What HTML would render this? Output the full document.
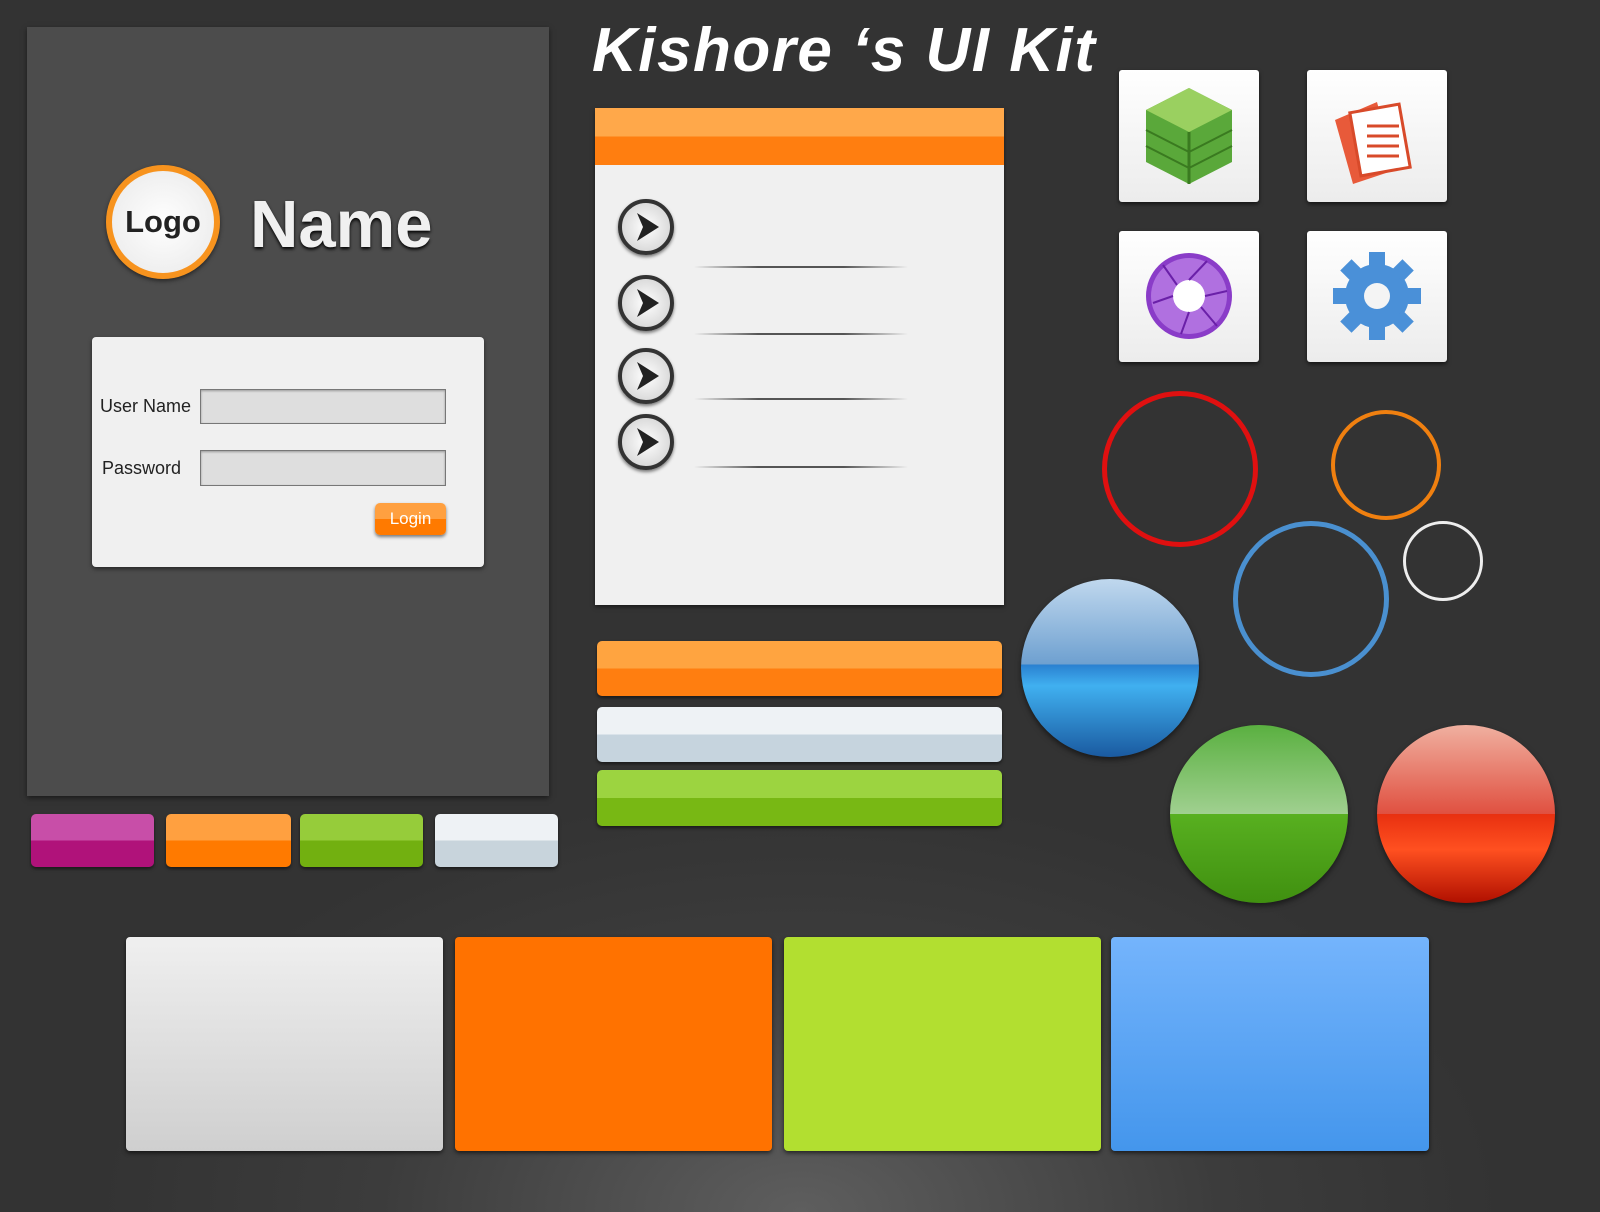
<!DOCTYPE html>
<html><head><meta charset="utf-8"><style>
body{margin:0;width:1600px;height:1212px;overflow:hidden;background:radial-gradient(ellipse 700px 420px at 800px 1212px,#5e5e5e,#3c3c3c 60%,#333);font-family:"Liberation Sans",sans-serif;position:relative}
.a{position:absolute}
.btn{border-radius:5px;box-shadow:0 2px 3px rgba(0,0,0,.5)}
.tile{background:linear-gradient(#fff,#ececec);border-radius:3px;box-shadow:0 2px 4px rgba(0,0,0,.6)}
.big{border-radius:4px;box-shadow:0 2px 4px rgba(0,0,0,.6)}
.ring{border-radius:50%;box-sizing:border-box}
.ball{border-radius:50%;box-shadow:0 3px 6px rgba(0,0,0,.5)}
.arrow{width:56px;height:56px;border-radius:50%;border:4px solid #333;box-sizing:border-box;background:radial-gradient(#fff,#ccc);box-shadow:0 2px 3px rgba(0,0,0,.5)}
.line{height:2px;background:linear-gradient(90deg,transparent,#555 30%,#555 70%,transparent)}
</style></head><body>
<div class="a" style="left:27px;top:27px;width:522px;height:769px;background:#4c4c4c;box-shadow:0 2px 5px rgba(0,0,0,.5)"></div>
<div class="a ring" style="left:106px;top:165px;width:114px;height:114px;border:6px solid #f7931e;background:radial-gradient(#fff,#e8e8e8);box-shadow:0 2px 4px rgba(0,0,0,.5)"></div>
<div class="a" style="left:106px;top:204px;width:114px;text-align:center;font-weight:bold;font-size:31px;color:#222">Logo</div>
<div class="a" style="left:250px;top:186px;font-weight:bold;font-size:67px;color:#f0f0f0;text-shadow:0 2px 3px #000">Name</div>
<div class="a" style="left:92px;top:337px;width:392px;height:230px;background:#f0f0f0;border-radius:4px;box-shadow:0 2px 4px rgba(0,0,0,.5)"></div>
<div class="a" style="left:100px;top:396px;font-size:18px;color:#222">User Name</div>
<div class="a" style="left:102px;top:458px;font-size:18px;color:#222">Password</div>
<div class="a" style="left:200px;top:389px;width:246px;height:35px;background:#dedede;border:1px solid #777;box-sizing:border-box;box-shadow:inset 0 1px 2px #999"></div>
<div class="a" style="left:200px;top:450px;width:246px;height:36px;background:#dedede;border:1px solid #777;box-sizing:border-box;box-shadow:inset 0 1px 2px #999"></div>
<div class="a btn" style="left:375px;top:503px;width:71px;height:32px;background:linear-gradient(#ffa040 50%,#ff7a00 50%);color:#fff;font-size:17px;text-align:center;line-height:32px">Login</div>
<div class="a btn" style="left:31px;top:814px;width:123px;height:53px;background:linear-gradient(#c84ea8 50%,#b0127a 50%)"></div>
<div class="a btn" style="left:166px;top:814px;width:125px;height:53px;background:linear-gradient(#ffa040 50%,#ff7a00 50%)"></div>
<div class="a btn" style="left:300px;top:814px;width:123px;height:53px;background:linear-gradient(#96cc3a 50%,#72b010 50%)"></div>
<div class="a btn" style="left:435px;top:814px;width:123px;height:53px;background:linear-gradient(#eef2f5 50%,#c8d4dc 50%)"></div>
<div class="a" style="left:592px;top:15px;font-weight:bold;font-style:italic;font-size:62px;color:#fff;letter-spacing:1.5px">Kishore ‘s UI Kit</div>
<div class="a" style="left:595px;top:108px;width:409px;height:497px;background:#f0f0f0;box-shadow:0 2px 4px rgba(0,0,0,.5)"></div>
<div class="a" style="left:595px;top:108px;width:409px;height:57px;background:linear-gradient(#ffa84a 50%,#ff7e10 50%)"></div>
<div class="a arrow" style="left:618px;top:199px"></div>
<div class="a arrow" style="left:618px;top:275px"></div>
<div class="a arrow" style="left:618px;top:348px"></div>
<div class="a arrow" style="left:618px;top:414px"></div>
<svg class="a" style="left:620px;top:201px" width="52" height="270"><g fill="#222"><path d="M17 12L39 26L17 40L23 26Z"/><path d="M17 88L39 102L17 116L23 102Z"/><path d="M17 161L39 175L17 189L23 175Z"/><path d="M17 227L39 241L17 255L23 241Z"/></g></svg>
<div class="a line" style="left:694px;top:266px;width:214px"></div>
<div class="a line" style="left:694px;top:333px;width:214px"></div>
<div class="a line" style="left:694px;top:398px;width:214px"></div>
<div class="a line" style="left:694px;top:466px;width:214px"></div>
<div class="a btn" style="left:597px;top:641px;width:405px;height:55px;background:linear-gradient(#ffa440 50%,#ff7e10 50%)"></div>
<div class="a btn" style="left:597px;top:707px;width:405px;height:55px;background:linear-gradient(#eef2f5 50%,#c6d4de 50%)"></div>
<div class="a btn" style="left:597px;top:770px;width:405px;height:56px;background:linear-gradient(#9cd440 50%,#78b814 50%)"></div>
<div class="a tile" style="left:1119px;top:70px;width:140px;height:132px"></div>
<div class="a tile" style="left:1307px;top:70px;width:140px;height:132px"></div>
<div class="a tile" style="left:1119px;top:231px;width:140px;height:131px"></div>
<div class="a tile" style="left:1307px;top:231px;width:140px;height:131px"></div>
<svg class="a" style="left:1119px;top:70px" width="140" height="132"><path d="M70 18L113 40L113 92L70 114L27 92L27 40Z" fill="#5aa83a"/><path d="M70 18L113 40L70 62L27 40Z" fill="#9ad060"/><path d="M70 62L70 114" stroke="#3a7a20" stroke-width="3"/><path d="M27 60L70 82L113 60M27 76L70 98L113 76" stroke="#3a7a20" stroke-width="2" fill="none"/></svg>
<svg class="a" style="left:1307px;top:70px" width="140" height="132"><path d="M28 50L70 32L88 100L46 114Z" fill="#e85a3a"/><rect x="48" y="38" width="50" height="64" fill="#fff" stroke="#d84a2a" stroke-width="3" transform="rotate(-10 73 70)"/><g stroke="#d84a2a" stroke-width="3"><path d="M60 56h32M60 66h32M60 76h32M60 86h32"/></g></svg>
<svg class="a" style="left:1119px;top:231px" width="140" height="131"><circle cx="70" cy="65" r="43" fill="#8a3cc8"/><circle cx="70" cy="65" r="38" fill="#b070e0"/><circle cx="70" cy="65" r="16" fill="#fff"/><g stroke="#6a20a8" stroke-width="2"><path d="M70 49L88 30M86 65L108 60M70 81L62 103M54 65L34 72M58 54L44 34M82 76L98 95"/></g></svg>
<svg class="a" style="left:1307px;top:231px" width="140" height="131"><g transform="translate(70 65)" fill="#4a90d8"><circle r="32"/><g id="t"><rect x="-8" y="-44" width="16" height="16"/></g><use href="#t" transform="rotate(45)"/><use href="#t" transform="rotate(90)"/><use href="#t" transform="rotate(135)"/><use href="#t" transform="rotate(180)"/><use href="#t" transform="rotate(225)"/><use href="#t" transform="rotate(270)"/><use href="#t" transform="rotate(315)"/><circle r="13" fill="#f4f4f4"/></g></svg>
<div class="a ring" style="left:1102px;top:391px;width:156px;height:156px;border:5px solid #e01010"></div>
<div class="a ring" style="left:1331px;top:410px;width:110px;height:110px;border:4px solid #f08010"></div>
<div class="a ring" style="left:1233px;top:521px;width:156px;height:156px;border:5px solid #4a90d0"></div>
<div class="a ring" style="left:1403px;top:521px;width:80px;height:80px;border:3px solid #eee"></div>
<div class="a ball" style="left:1021px;top:579px;width:178px;height:178px;background:linear-gradient(#c0d8ee,#6ea0d0 48%,#2a80d0 48%,#40b0f0 60%,#1a5aa0)"></div>
<div class="a ball" style="left:1170px;top:725px;width:178px;height:178px;background:linear-gradient(#5ab040,#a0d090 50%,#58b020 50%,#409010)"></div>
<div class="a ball" style="left:1377px;top:725px;width:178px;height:178px;background:linear-gradient(#f0b0a0,#e05040 50%,#e83010 50%,#ff5020 70%,#b01000)"></div>
<div class="a big" style="left:126px;top:937px;width:317px;height:214px;background:linear-gradient(#efefef,#cfcfcf)"></div>
<div class="a big" style="left:455px;top:937px;width:317px;height:214px;background:#ff7200"></div>
<div class="a big" style="left:784px;top:937px;width:317px;height:214px;background:#b2df30"></div>
<div class="a big" style="left:1111px;top:937px;width:318px;height:214px;background:linear-gradient(#74b4fc,#4496ec)"></div>
</body></html>
